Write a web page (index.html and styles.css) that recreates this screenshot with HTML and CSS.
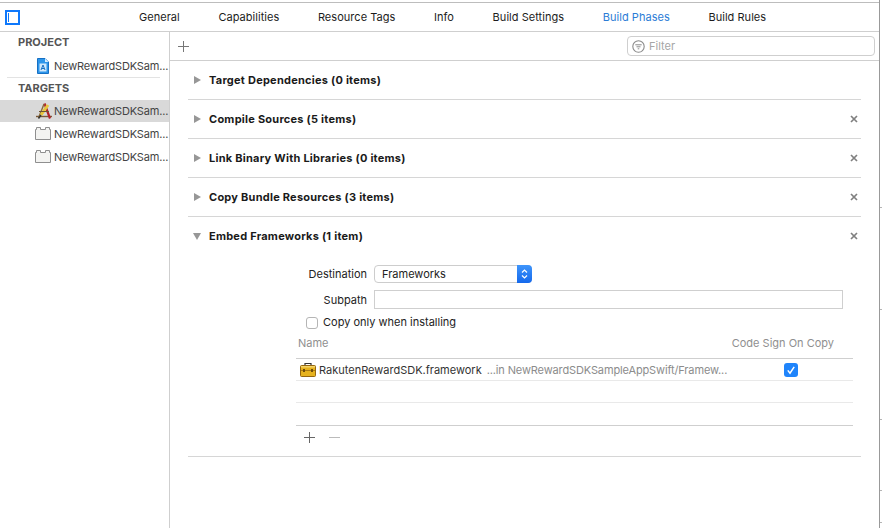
FILE: index.html
```html
<!DOCTYPE html>
<html lang="en">
<head>
<meta charset="utf-8">
<title>Build Phases</title>
<link rel="stylesheet" href="styles.css">
</head>
<body>
<div class="window">
  <div class="main">
    <header class="tabs">
      <svg class="sidebar-toggle" width="15" height="15" viewBox="0 0 15 15"><rect x="1" y="1" width="13" height="13" fill="#fff" stroke="#0f78fb" stroke-width="2"/><rect x="3" y="3" width="1" height="9" fill="#0f78fb"/></svg>
      <nav class="tab-list">
        <span class="tab">General</span>
        <span class="tab">Capabilities</span>
        <span class="tab">Resource Tags</span>
        <span class="tab">Info</span>
        <span class="tab">Build Settings</span>
        <span class="tab tab-active">Build Phases</span>
        <span class="tab">Build Rules</span>
      </nav>
    </header>
    <div class="content">
      <aside class="sidebar">
        <div class="group-title">PROJECT</div>
        <div class="item item-project">
          <svg class="icon-doc" width="14" height="16" viewBox="0 0 14 16"><path d="M1.5 .5H9L12.5 4V15.5H1.5Z" fill="#2c95ea" stroke="#1670c4"/><path d="M9 .5V4H12.5Z" fill="#d5ecff"/><rect x="3.5" y="5.5" width="7" height="8" fill="#cfe8fb"/><path d="M5 12 7 7l2 5M5.8 10.5h2.4" fill="none" stroke="#1670c4"/></svg>
          <span class="item-name">NewRewardSDKSam...</span>
        </div>
        <div class="sidebar-rule"></div>
        <div class="group-title">TARGETS</div>
        <div class="item item-selected">
          <svg class="icon-app" width="18" height="18" viewBox="0 0 18 18"><path d="M1 14.5h16" stroke="#7a5a3a" stroke-width="1.4"/><path d="M9.5 1.5 15 16.5" stroke="#b3232a" stroke-width="2.2"/><path d="M9 2 3.5 16" stroke="#8a6a3a" stroke-width="1.4"/><path d="M13 3 6 13" stroke="#e8c53a" stroke-width="3"/><path d="M6 13 3.5 16.5" stroke="#333" stroke-width="1.4"/><path d="M4 9.5h10" stroke="#6d5236" stroke-width="1"/></svg>
          <span class="item-name">NewRewardSDKSam...</span>
        </div>
        <div class="item">
          <svg class="icon-brick" width="16" height="13" viewBox="0 0 16 13"><path d="M.5 12.5V2.5H1.5V.5H5.5V2.5H10.5V.5H14.5V2.5H15.5V12.5Z" fill="#f3f3f1" stroke="#8f8f8f"/></svg>
          <span class="item-name">NewRewardSDKSam...</span>
        </div>
        <div class="item">
          <svg class="icon-brick" width="16" height="13" viewBox="0 0 16 13"><path d="M.5 12.5V2.5H1.5V.5H5.5V2.5H10.5V.5H14.5V2.5H15.5V12.5Z" fill="#f3f3f1" stroke="#8f8f8f"/></svg>
          <span class="item-name">NewRewardSDKSam...</span>
        </div>
      </aside>
      <main class="editor">
        <div class="toolbar">
          <svg class="toolbar-plus" width="11" height="11" viewBox="0 0 11 11"><path d="M5.5 0v11M0 5.5h11" stroke="#777" stroke-width="1"/></svg>
          <div class="filter">
            <svg width="13" height="13" viewBox="0 0 13 13"><circle cx="6.5" cy="6.5" r="5.7" fill="none" stroke="#8a8a8a" stroke-width="1.1"/><path d="M3.3 4.8h6.4M4.5 6.8h4M5.7 8.8h1.6" stroke="#8a8a8a" stroke-width="1"/></svg>
            <span>Filter</span>
          </div>
        </div>
        <div class="phases">
          <section class="phase">
            <div class="phase-head"><i class="tri"></i><span class="phase-title">Target Dependencies (0 items)</span></div>
          </section>
          <section class="phase">
            <div class="phase-head"><i class="tri"></i><span class="phase-title">Compile Sources (5 items)</span>
              <svg class="close" width="8" height="8" viewBox="0 0 8 8"><path d="M1 1l6 6M7 1 1 7" stroke="#808080" stroke-width="1.7"/></svg></div>
          </section>
          <section class="phase">
            <div class="phase-head"><i class="tri"></i><span class="phase-title">Link Binary With Libraries (0 items)</span>
              <svg class="close" width="8" height="8" viewBox="0 0 8 8"><path d="M1 1l6 6M7 1 1 7" stroke="#808080" stroke-width="1.7"/></svg></div>
          </section>
          <section class="phase">
            <div class="phase-head"><i class="tri"></i><span class="phase-title">Copy Bundle Resources (3 items)</span>
              <svg class="close" width="8" height="8" viewBox="0 0 8 8"><path d="M1 1l6 6M7 1 1 7" stroke="#808080" stroke-width="1.7"/></svg></div>
          </section>
          <section class="phase">
            <div class="phase-head"><i class="tri tri-open"></i><span class="phase-title">Embed Frameworks (1 item)</span>
              <svg class="close" width="8" height="8" viewBox="0 0 8 8"><path d="M1 1l6 6M7 1 1 7" stroke="#808080" stroke-width="1.7"/></svg></div>
            <div class="phase-body">
              <div class="form-row">
                <label class="form-label">Destination</label>
                <div class="popup">
                  <span class="popup-value">Frameworks</span>
                  <span class="popup-arrows"><svg width="7" height="12" viewBox="0 0 7 12"><path d="M1 4.5 3.5 2 6 4.5M1 7.5 3.5 10 6 7.5" fill="none" stroke="#fff" stroke-width="1.2"/></svg></span>
                </div>
              </div>
              <div class="form-row">
                <label class="form-label">Subpath</label>
                <div class="text-field"></div>
              </div>
              <div class="check-row">
                <span class="checkbox"></span>
                <span class="check-label">Copy only when installing</span>
              </div>
              <div class="table">
                <div class="table-head"><span>Name</span><span class="col-sign">Code Sign On Copy</span></div>
                <div class="table-row">
                  <svg class="toolbox" width="16" height="15" viewBox="0 0 16 15"><path d="M5 4V1.5h6V4" fill="none" stroke="#333" stroke-width="1.2"/><rect x=".5" y="3.5" width="15" height="11" rx="1" fill="#e6b21e" stroke="#94660f"/><rect x="1" y="8" width="14" height="1" fill="#a87a12"/><rect x="1" y="4" width="14" height="1.5" fill="#f5d56a"/><rect x="3" y="7" width="2" height="3" fill="#6f4c0c"/><rect x="11" y="7" width="2" height="3" fill="#6f4c0c"/></svg>
                  <span class="file-name">RakutenRewardSDK.framework</span>
                  <span class="file-path">...in NewRewardSDKSampleAppSwift/Framew...</span>
                  <span class="sign-cell"><svg width="14" height="14" viewBox="0 0 14 14"><rect width="14" height="14" rx="3" fill="#1f84fb"/><path d="M3.8 7.4 6 10.2 10.2 3.8" fill="none" stroke="#fff" stroke-width="1.5"/></svg></span>
                </div>
                <div class="table-row"></div>
                <div class="table-row table-row-last"></div>
                <div class="table-foot">
                  <svg width="11" height="11" viewBox="0 0 11 11"><path d="M5.5 0v11M0 5.5h11" stroke="#666"/></svg>
                  <svg width="11" height="11" viewBox="0 0 11 11"><path d="M0 5.5h11" stroke="#bbb"/></svg>
                </div>
              </div>
            </div>
          </section>
        </div>
      </main>
    </div>
  </div>
  <div class="edge">
    <div class="edge-seg seg-1"></div>
    <div class="edge-seg seg-2"></div>
    <div class="edge-seg seg-3"></div>
    <div class="edge-seg seg-4"></div>
    <div class="edge-seg seg-5"></div>
  </div>
</div>
</body>
</html>
```
FILE: styles.css
```css
* { box-sizing: border-box; }
html, body { margin: 0; padding: 0; background: #fff; }
body {
  width: 882px;
  height: 528px;
  overflow: hidden;
  font-family: Inter, "Liberation Sans", sans-serif;
  font-size: 11px;
  color: #222;
}
.window { display: flex; height: 528px; }
.main { width: 879px; display: flex; flex-direction: column; padding-top: 2px; }
.edge { width: 3px; border-left: 1px solid #999; display: flex; flex-direction: column; }
.edge-seg { border-bottom: 1px solid #b5b5b5; }
.seg-1 { height: 208px; }
.seg-2 { height: 102px; }
.seg-3 { height: 110px; }
.seg-4 { height: 71px; }
.seg-5 { height: 32px; }

.tabs {
  height: 30px;
  flex: none;
  display: flex;
  align-items: center;
  border-top: 1px solid #bdbdbd;
  border-bottom: 1px solid #cfcfcf;
  padding-left: 5px;
}
.sidebar-toggle { flex: none; margin-top: 1px; }
.tab-list { display: flex; gap: 38.6px; margin-left: 119px; letter-spacing: .04px; }
.tab { color: #1c1c1c; }
.tab-active { color: #2b7cd6; }

.content { flex: 1; display: flex; min-height: 0; }
.sidebar { width: 170px; flex: none; border-right: 1px solid #cfcfcf; padding-top: 3px; }
.group-title { height: 15px; line-height: 15px; padding-left: 18px; font-weight: 700; color: #555; }
.item { height: 23px; display: flex; align-items: center; padding-left: 35px; color: #444; }
.item-project { margin-top: 4px; }
.item-selected { background: #d9d9d9; height: 22px; margin-top: 4px; }
.icon-doc { flex: none; margin-left: 1px; margin-right: 4px; }
.icon-app { flex: none; margin-right: 1px; }
.icon-brick { flex: none; margin-right: 3px; }
.item-name { white-space: nowrap; letter-spacing: -.16px; }
.sidebar-rule { height: 1px; background: #e3e3e3; margin: 0 9px 3px 7px; }

.editor { flex: 1; min-width: 0; display: flex; flex-direction: column; }
.toolbar { height: 29px; flex: none; display: flex; align-items: center; justify-content: space-between; padding: 0 4px 0 8px; border-bottom: 1px solid #cfcfcf; }
.filter { width: 248px; height: 20px; border: 1px solid #cfcfcf; border-radius: 4px; display: flex; align-items: center; gap: 4px; padding-left: 4px; color: #a6a6a6; }

.phases { padding: 0 18px; }
.phase { border-bottom: 1px solid #d6d6d6; }
.phase-head { height: 38px; display: flex; align-items: center; position: relative; }
.tri { width: 0; height: 0; margin-left: 6px; border-left: 7px solid #979797; border-top: 4.5px solid transparent; border-bottom: 4.5px solid transparent; }
.tri-open { margin-left: 5px; margin-right: 0; border-top: 7px solid #979797; border-left: 4px solid transparent; border-right: 4px solid transparent; border-bottom: 0; }
.phase-title { margin-left: 8px; font-weight: 700; color: #1a1a1a; letter-spacing: .24px; }
.close { position: absolute; right: 3px; top: 15px; }

.phase-body { padding: 10px 0 7px; }
.form-row { display: flex; align-items: center; gap: 7px; margin-bottom: 7px; }
.form-label { width: 179px; text-align: right; color: #222; }
.popup { width: 158px; height: 18px; border: 1px solid #cdcdcd; border-radius: 4px; display: flex; align-items: center; justify-content: space-between; padding-left: 7px; position: relative; }
.popup-arrows { position: absolute; right: -1px; top: -1px; width: 15px; height: 18px; background: linear-gradient(#3f95fb, #1569ec); border-radius: 0 4px 4px 0; display: flex; align-items: center; justify-content: center; }
.text-field { width: 469px; height: 19px; border: 1px solid #cfcfcf; }
.check-row { height: 13px; display: flex; align-items: center; gap: 5px; margin-left: 118px; }
.check-label { padding-bottom: 2px; }
.checkbox { width: 12px; height: 12px; border: 1px solid #b5b5b5; border-radius: 3px; }
.table { margin-left: 108px; width: 557px; }
.table-head { height: 30px; padding: 0 19px 2px 2px; display: flex; align-items: center; justify-content: space-between; color: #8f8f8f; border-bottom: 1px solid #cfcfcf; }
.table-row { height: 22px; display: flex; align-items: center; position: relative; border-bottom: 1px solid #e9e9e9; }
.table-row-last { height: 23px; border-bottom-color: #cfcfcf; }
.toolbox { margin-left: 4px; flex: none; }
.file-name { margin-left: 3px; color: #333; }
.file-path { margin-left: 5px; color: #8c8c8c; letter-spacing: -.13px; }
.sign-cell { position: absolute; left: 488px; top: 4px; line-height: 0; }
.table-foot { height: 23px; display: flex; align-items: center; gap: 14px; padding-left: 8px; }
```
